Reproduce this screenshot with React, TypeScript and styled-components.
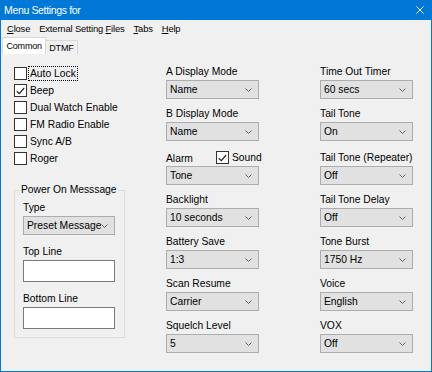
import styled, { createGlobalStyle } from 'styled-components';

const GlobalStyle = createGlobalStyle`
  html, body {
    margin: 0;
    padding: 0;
    background: #f0f0f0;
  }
  body {
    font-family: "Liberation Sans", Arial, sans-serif;
  }
`;

const Window = styled.div`
  width: 432px;
  height: 372px;
  box-sizing: border-box;
  border: 1px solid #0078d7;
  border-top: none;
  background: #f0f0f0;
  display: flex;
  flex-direction: column;
  color: #000;
  font-family: "Liberation Sans", Arial, sans-serif;
  overflow: hidden;
`;

const TitleBar = styled.div`
  height: 19px;
  flex: none;
  background: #0078d7;
  color: #fff;
  display: flex;
  align-items: center;
  justify-content: space-between;
  padding: 0 7px 1px 3px;
  font-size: 10.5px;
  letter-spacing: -0.35px;
`;

const MenuBar = styled.div`
  height: 17px;
  flex: none;
  display: flex;
  align-items: center;
  padding-left: 1.5px;
  font-size: 9.4px;
  letter-spacing: -0.15px;
`;

const MenuItem = styled.span`
  padding: 0 4.5px;
  u {
    text-decoration: underline;
    text-underline-offset: 1px;
  }
`;

const TabStrip = styled.div`
  height: 17px;
  flex: none;
  display: flex;
  align-items: flex-end;
  padding-left: 1px;
  font-size: 9px;
  letter-spacing: -0.2px;
`;

const Tab = styled.div<{ active?: boolean }>`
  box-sizing: border-box;
  height: ${({ active }) => (active ? '17px' : '14px')};
  padding: ${({ active }) => (active ? '0 3.5px' : '0 3px')};
  background: ${({ active }) => (active ? '#ffffff' : '#f0f0f0')};
  border: 1px solid #d9d9d9;
  border-bottom: none;
  ${({ active }) => (active ? '' : 'border-left: none;')}
  display: flex;
  align-items: center;
`;

const TabPanel = styled.div`
  flex: 1;
  display: grid;
  grid-template-columns: 152px 154px 1fr;
  align-items: start;
  padding: 11px 0 0 13px;
  font-size: 10.3px;
`;

const LeftColumn = styled.div`
  display: flex;
  flex-direction: column;
`;

const FieldColumn = styled.div`
  display: flex;
  flex-direction: column;
  gap: 9px;
  padding-top: 1px;
`;

const CheckRow = styled.div`
  height: 17px;
  display: flex;
  align-items: center;
`;

const Box = styled.span`
  width: 13px;
  height: 13px;
  box-sizing: border-box;
  border: 1px solid #333333;
  background: #ffffff;
  display: inline-flex;
  align-items: center;
  justify-content: center;
  flex: none;
`;

const CheckText = styled.span<{ focused?: boolean }>`
  margin-left: 1px;
  padding: 0 1px;
  line-height: 13px;
  border: 1px dotted ${({ focused }) => (focused ? '#000' : 'transparent')};
  white-space: nowrap;
`;

const Field = styled.div`
  display: flex;
  flex-direction: column;
  gap: 2px;
`;

const Label = styled.div`
  line-height: 12px;
  white-space: nowrap;
`;

const AlarmRow = styled.div`
  height: 14px;
  display: grid;
  grid-template-columns: 50px auto;
  align-items: end;
`;

const InlineCheck = styled.div`
  display: flex;
  align-items: center;
`;

const ComboBox = styled.div<{ width?: number }>`
  box-sizing: border-box;
  width: ${({ width }) => width ?? 93}px;
  height: 19px;
  background: #e1e1e1;
  border: 1px solid #adadad;
  display: flex;
  align-items: center;
  padding: 0 6px 0 3px;
  overflow: hidden;
`;

const ComboText = styled.span`
  flex: 1;
  overflow: hidden;
  white-space: nowrap;
`;

const TextBox = styled.div`
  box-sizing: border-box;
  width: 92px;
  height: 22px;
  background: #ffffff;
  border: 1px solid #7a7a7a;
`;

const Group = styled.fieldset`
  margin: 17px 0 0 0;
  padding: 0 0 8px 8px;
  width: 111px;
  min-inline-size: 0;
  box-sizing: border-box;
  border: 1px solid #dcdcdc;
  display: flex;
  flex-direction: column;
`;

const Legend = styled.legend`
  padding: 0 1px;
  margin-left: -3px;
  line-height: 12px;
  white-space: nowrap;
`;

const GroupBody = styled.div`
  display: flex;
  flex-direction: column;
  gap: 11px;
  padding-top: 6px;
`;

const CheckMark = () => (
  <svg width="9" height="8" viewBox="0 0 9 8">
    <path d="M0.8 4.2 L3.3 6.6 L8.2 1" fill="none" stroke="#222" strokeWidth="1.2" />
  </svg>
);

const Chevron = () => (
  <svg width="7" height="4" viewBox="0 0 7 4">
    <path d="M0.5 0.5 L3.5 3.5 L6.5 0.5" fill="none" stroke="#606060" strokeWidth="1" />
  </svg>
);

const CloseIcon = () => (
  <svg width="8" height="8" viewBox="0 0 8 8">
    <path d="M0.5 0.5 L7.5 7.5 M7.5 0.5 L0.5 7.5" stroke="#fff" strokeWidth="1" />
  </svg>
);

const Check = (props: { label: string; checked?: boolean; focused?: boolean }) => (
  <CheckRow>
    <Box>{props.checked && <CheckMark />}</Box>
    <CheckText focused={props.focused}>{props.label}</CheckText>
  </CheckRow>
);

const Combo = (props: { value: string; width?: number }) => (
  <ComboBox width={props.width}>
    <ComboText>{props.value}</ComboText>
    <Chevron />
  </ComboBox>
);

const middleFields = [
  { label: 'A Display Mode', value: 'Name' },
  { label: 'B Display Mode', value: 'Name' },
  { label: 'Alarm', value: 'Tone' },
  { label: 'Backlight', value: '10 seconds' },
  { label: 'Battery Save', value: '1:3' },
  { label: 'Scan Resume', value: 'Carrier' },
  { label: 'Squelch Level', value: '5' },
];

const rightFields = [
  { label: 'Time Out Timer', value: '60 secs' },
  { label: 'Tail Tone', value: 'On' },
  { label: 'Tail Tone (Repeater)', value: 'Off' },
  { label: 'Tail Tone Delay', value: 'Off' },
  { label: 'Tone Burst', value: '1750 Hz' },
  { label: 'Voice', value: 'English' },
  { label: 'VOX', value: 'Off' },
];

const App = () => {
  return (
    <>
      <GlobalStyle />
      <Window>
        <TitleBar>
          <span>Menu Settings for</span>
          <CloseIcon />
        </TitleBar>
        <MenuBar>
          <MenuItem><u>C</u>lose</MenuItem>
          <MenuItem>External Setting <u>F</u>iles</MenuItem>
          <MenuItem><u>T</u>abs</MenuItem>
          <MenuItem><u>H</u>elp</MenuItem>
        </MenuBar>
        <TabStrip>
          <Tab active>Common</Tab>
          <Tab>DTMF</Tab>
        </TabStrip>
        <TabPanel>
          <LeftColumn>
            <Check label="Auto Lock" focused />
            <Check label="Beep" checked />
            <Check label="Dual Watch Enable" />
            <Check label="FM Radio Enable" />
            <Check label="Sync A/B" />
            <Check label="Roger" />
            <Group>
              <Legend>Power On Messsage</Legend>
              <GroupBody>
                <Field>
                  <Label>Type</Label>
                  <Combo value="Preset Message" width={92} />
                </Field>
                <Field>
                  <Label>Top Line</Label>
                  <TextBox />
                </Field>
                <Field>
                  <Label>Bottom Line</Label>
                  <TextBox />
                </Field>
              </GroupBody>
            </Group>
          </LeftColumn>
          <FieldColumn>
            {middleFields.map(f => (
              <Field key={f.label}>
                {f.label === 'Alarm' ? (
                  <AlarmRow>
                    <Label>{f.label}</Label>
                    <InlineCheck>
                      <Box><CheckMark /></Box>
                      <CheckText>Sound</CheckText>
                    </InlineCheck>
                  </AlarmRow>
                ) : (
                  <Label>{f.label}</Label>
                )}
                <Combo value={f.value} />
              </Field>
            ))}
          </FieldColumn>
          <FieldColumn>
            {rightFields.map((f, i) => (
              <Field key={f.label}>
                {i === 2 ? <AlarmRow><Label>{f.label}</Label></AlarmRow> : <Label>{f.label}</Label>}
                <Combo value={f.value} />
              </Field>
            ))}
          </FieldColumn>
        </TabPanel>
      </Window>
    </>
  );
};

export default App;
